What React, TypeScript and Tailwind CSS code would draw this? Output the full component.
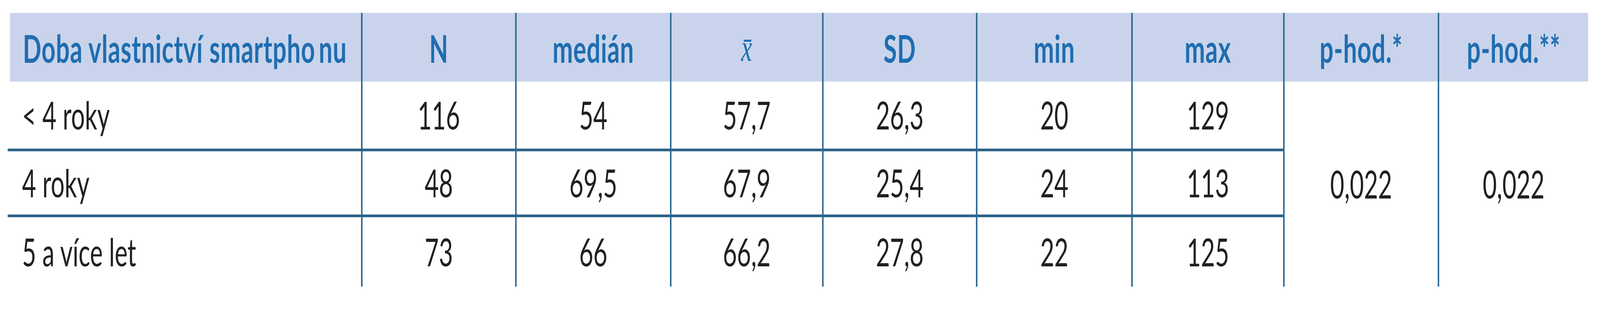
const rows = [
  { label: '< 4 roky', values: ['116', '54', '57,7', '26,3', '20', '129'] },
  { label: '4 roky', values: ['48', '69,5', '67,9', '25,4', '24', '113'] },
  { label: '5 a více let', values: ['73', '66', '66,2', '27,8', '22', '125'] },
]

const heads = ['N', 'medián', 'xbar', 'SD', 'min', 'max', 'p-hod.*', 'p-hod.**']

// the table is drawn at 6448px wide; fit it to the real window width
const DESIGN_W = 6448

export default function App() {
  const sx = typeof window !== 'undefined' ? window.innerWidth / DESIGN_W : 1

  return (
    <div className="w-full h-[800px] overflow-hidden bg-white">
      <div
        className="w-[6448px] h-[800px] pt-[33px] pl-[31px] font-['Lato',sans-serif]"
        style={{ transform: `scaleX(${sx})`, transformOrigin: 'left top' }}
      >
        <div className="grid grid-cols-[1424px_621px_624px_613px_620px_626px_612px_623px_606px] grid-rows-[176px_179px_169px_178px] text-[98px] leading-[1.2] text-[#231f20]">
          {/* header */}
          <div className="ml-[9px] bg-[#c9d4ec] flex items-center pl-[52px] pt-[5px] font-bold tracking-[0.015em] text-[#1f6db0]">
            Doba vlastnictví smartpho<span className="ml-[14px]">nu</span>
          </div>
          {heads.map((h) => (
            <div
              key={h}
              className="bg-[#c9d4ec] border-l-[6px] border-[#2a6590] flex items-center justify-center pt-[5px] font-bold tracking-[0.015em] text-[#1f6db0]"
            >
              {h === 'xbar' ? (
                <span className="font-['Liberation_Serif',serif] italic font-normal">x&#772;</span>
              ) : (
                h
              )}
            </div>
          ))}

          {/* body */}
          {rows.map((r, i) => {
            const line = i < 2 ? 'border-b-[7px] border-b-[#2d6488]' : ''
            return [
              <div key={`l${i}`} className={`flex items-center pl-[58px] ${line}`}>
                {r.label}
              </div>,
              ...r.values.map((v, j) => (
                <div
                  key={`v${i}${j}`}
                  className={`flex items-center justify-center border-l-[6px] border-l-[#2a6590] ${line}`}
                >
                  {v}
                </div>
              )),
              ...(i === 0
                ? [
                    <div key="p1" className="row-span-3 flex items-center justify-center border-l-[6px] border-l-[#2a6590]">
                      0,022
                    </div>,
                    <div key="p2" className="row-span-3 flex items-center justify-center border-l-[6px] border-l-[#2a6590]">
                      0,022
                    </div>,
                  ]
                : []),
            ]
          })}
        </div>
      </div>
    </div>
  )
}
